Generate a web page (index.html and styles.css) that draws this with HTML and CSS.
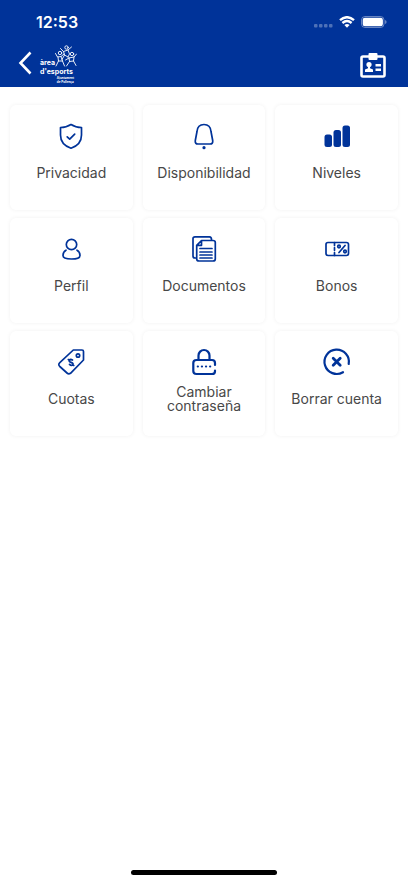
FILE: index.html
```html
<!DOCTYPE html>
<html lang="es">
<head>
<meta charset="utf-8">
<meta name="viewport" content="width=device-width, initial-scale=1">
<title>Perfil</title>
<link rel="stylesheet" href="styles.css">
</head>
<body>
<header class="header">
  <div class="status">
    <span class="time">12:53</span>
    <div class="indicators">
      <svg class="dots" width="20" height="6" viewBox="0 0 20 6" fill="#fff" opacity=".3"><rect x="1" y="1" width="3.500" height="3.500" rx="1"/><rect x="6" y="1" width="3.500" height="3.500" rx="1"/><rect x="11" y="1" width="3.500" height="3.500" rx="1"/><rect x="16" y="1" width="3.500" height="3.500" rx="1"/></svg>
      <svg width="16" height="12" viewBox="0 0 16 12" fill="none" stroke="#fff" stroke-width="2.4"><path d="M1 4.200Q8-1.800 15 4.200M3.400 7Q8 3.100 12.600 7"/><path d="M5.400 9Q8 7 10.600 9L8 11.800Z" fill="#fff" stroke="none"/></svg>
      <svg width="26" height="12" viewBox="0 0 26 12"><rect x=".5" y=".5" width="22.500" height="11" rx="3.500" fill="none" stroke="#fff" opacity=".4"/><rect x="1.700" y="1.700" width="20.200" height="8.600" rx="2.200" fill="#fff"/><path d="M24.200 4v4q1.300-.6 1.300-2t-1.300-2Z" fill="#fff" opacity=".5"/></svg>
    </div>
  </div>
  <nav class="nav">
    <button class="icon-button" type="button" aria-label="Volver"><svg width="14" height="24" viewBox="0 0 14 24" fill="none" stroke="#fff" stroke-width="2.6"><path d="M12.500 1.500 2.500 12l10 10.500"/></svg></button>
    <div class="logo">
      <div class="logo-top"><span>àrea</span>
        <svg width="22" height="22" viewBox="0 0 22 22" fill="none" stroke="#fff" stroke-width=".9" stroke-linecap="round" stroke-linejoin="round"><circle cx="11.500" cy="2.500" r="1.700"/><circle cx="5" cy="8" r="1.700"/><circle cx="17" cy="9" r="1.700"/><path d="M5.500 3.500 8.500 6.500 13 5l3.500-3M8.500 6.500 9.500 10 7 14.500M13 5l1.500 4-1.500 3M9.500 10l3.500 2M.5 8.500 2.500 12 6 11.500 9 9M3 12l.5 4-2.500 5M6 11.500 7.500 16l2 5M3.500 16l4 0M14 13l5-1L21.500 9M19 12l-.5 4 2.500 4.500M14 13l.5 3.500-3 4.500M14.500 16.500l4-.5M14 13l-3.500 2"/></svg>
      </div>
      <span class="logo-name">d'esports</span>
      <span class="logo-sub">Ajuntament<br>de Pollença</span>
    </div>
    <button class="icon-button card-button" type="button" aria-label="Carnet"><svg width="26" height="25" viewBox="0 0 26 25"><rect x="1.500" y="3.500" width="23" height="20" rx="1.500" fill="none" stroke="#fff" stroke-width="2.600"/><rect x="8.500" y="0" width="9" height="7" rx="1" fill="#fff"/><circle cx="9" cy="11.500" r="2.600" fill="#fff"/><path d="M8 13h2v2.200l3 1.300V19H5v-2.500l3-1.300ZM15.500 11H21v2.500h-5.500ZM15.500 15.500H21V18h-5.500Z" fill="#fff"/></svg></button>
  </nav>
</header>
<main class="grid">
  <a class="card" href="#"><svg class="icon" viewBox="0 0 32 32"><path d="M16 4.500Q20.500 7.500 26.500 7.500V15C26.500 22 22.500 26 16 28.200 9.500 26 5.500 22 5.500 15V7.500Q11.500 7.500 16 4.500ZM12.200 16.800l2.500 2.400 5-5"/></svg><span class="label">Privacidad</span></a>
  <a class="card" href="#"><svg class="icon" viewBox="0 0 32 32"><path d="M16 4.500C11.500 4.500 9.300 7.700 9 11.500L7.300 20.500Q6.800 24 10 24H22Q25.200 24 24.700 20.500L23 11.500C22.700 7.700 20.500 4.500 16 4.500Z"/><circle class="solid" cx="16" cy="27.700" r="1.600"/></svg><span class="label">Disponibilidad</span></a>
  <a class="card" href="#"><svg class="icon" viewBox="0 0 32 32"><g class="solid"><rect x="3.500" y="14.500" width="7.500" height="12.500" rx="2.500"/><rect x="12.500" y="10" width="7.500" height="17" rx="2.500"/><rect x="21.500" y="5.500" width="7.500" height="21.500" rx="2.500"/></g></svg><span class="label">Niveles</span></a>
  <a class="card" href="#"><svg class="icon" viewBox="0 0 32 32"><circle cx="16.500" cy="11.500" r="5.200"/><path d="M11 17.200Q8 18.800 8 22.500 8 26 16.500 26T25 22.500Q25 18.800 22 17.200"/></svg><span class="label">Perfil</span></a>
  <a class="card" href="#"><svg class="icon" viewBox="0 0 32 32"><path d="M8.500 25H7Q5 25 5 23V5.500Q5 3.800 7 3.800H21.500Q23.500 3.800 23.500 6.500M13.500 7.500H25Q27.300 7.500 27.300 9.500V26Q27.300 28 25 28H11Q8.700 28 8.700 26V12.300ZM13.500 7.500V12.300H8.700M12 15.500H24M12 19H24M12 22H24M12 25H24"/></svg><span class="label">Documentos</span></a>
  <a class="card" href="#"><svg class="icon" viewBox="0 0 32 32"><rect x="5" y="9.500" width="22.500" height="13" rx="2"/><path d="M13.500 9.500v3M13.500 14.700v2.600M13.500 19.500v3M18 19.500l6-7"/><circle cx="18" cy="13.500" r="1.300"/><circle cx="24" cy="18.500" r="1.300"/></svg><span class="label">Bonos</span></a>
  <a class="card" href="#"><svg class="icon" viewBox="0 0 32 32"><path d="M18.300 4H27Q28.500 4 28.500 5.500V14L15.500 27.300Q13.700 28.500 12 27L4.800 20.500Q2.800 18.500 4.800 16.700Z"/><circle cx="23" cy="9.500" r="1.700"/><path d="M17.500 14q-2.200-1.200-3.200.5c-1 2 4.700 1.700 3.600 4q-1.300 1.800-3.400-.2M13.300 13.500l1 1M17.800 18.500l1 1"/></svg><span class="label">Cuotas</span></a>
  <a class="card" href="#"><svg class="icon thick" viewBox="0 0 32 32"><path d="M10.500 13.500V9.500a5.500 5.500 0 0 1 11 0V13.500M27 19V17Q27 14 24 14H8.500Q5.300 14 5.300 17V25Q5.300 28 8.500 28H24Q27 28 27 25.200V24.500"/><path d="M9.800 20.500h.1M13.900 20.500h.1M18 20.500h.1M22.100 20.500h.1"/></svg><span class="label">Cambiar contraseña</span></a>
  <a class="card" href="#"><svg class="icon thick" viewBox="0 0 32 32"><path d="M27.700 18A12.200 12.200 0 1 0 22 26.200"/><path class="cross" d="M12.200 12.200l7 7M19.200 12.200l-7 7"/></svg><span class="label">Borrar cuenta</span></a>
</main>
<div class="home-bar"></div>
</body>
</html>
```
FILE: styles.css
```css
* { box-sizing: border-box; }
body {
  margin: 0;
  min-height: 100vh;
  display: flex;
  flex-direction: column;
  background: #fff;
  font-family: Inter, "Liberation Sans", sans-serif;
}
.header {
  background: #003399;
  color: #fff;
  min-height: 87px;
}
.status {
  display: flex;
  align-items: center;
  justify-content: space-between;
  height: 44px;
  padding: 0 21px 0 36px;
}
.time { font-size: 16px; font-weight: 600; }
.indicators { display: flex; align-items: center; gap: 6px; }
.dots { margin-top: 8px; }
.nav {
  display: flex;
  align-items: flex-start;
  padding: 1px 22px 0 18px;
}
.icon-button {
  margin: 6px 0 0;
  padding: 0;
  border: 0;
  background: none;
}
.icon-button svg { display: block; }
.card-button { margin-left: auto; margin-top: 8px; }
.logo {
  display: flex;
  flex-direction: column;
  margin-left: 8px;
  width: 38px;
  font-size: 7px;
  font-weight: 700;
  line-height: 9px;
}
.logo-top {
  display: flex;
  align-items: flex-end;
  height: 22px;
}
.logo-top svg { flex: none; }
.logo-sub {
  align-self: flex-end;
  margin-right: 4px;
  font-size: 3px;
  line-height: 4px;
}
.grid {
  display: grid;
  grid-template-columns: repeat(3, 1fr);
  gap: 8px 10px;
  padding: 18px 10px;
}
.card {
  display: flex;
  flex-direction: column;
  align-items: center;
  gap: 7px;
  min-height: 105px;
  padding: 15px 8px;
  border-radius: 6px;
  background: #fff;
  box-shadow: 0 0 4px rgba(0, 0, 0, 0.06);
  color: #484848;
  text-decoration: none;
}
.icon {
  width: 32px;
  height: 32px;
  fill: none;
  stroke: #003399;
  stroke-width: 1.7;
  stroke-linecap: round;
  stroke-linejoin: round;
}
.thick { stroke-width: 2.2; }
.cross { stroke-width: 2.8; }
.solid { fill: #003399; stroke: none; }
.label {
  display: flex;
  align-items: center;
  min-height: 28px;
  font-size: 14px;
  line-height: 14px;
  text-align: center;
}
.home-bar {
  width: 36%;
  height: 5px;
  margin: auto auto 8px;
  border-radius: 3px;
  background: #000;
}
```
